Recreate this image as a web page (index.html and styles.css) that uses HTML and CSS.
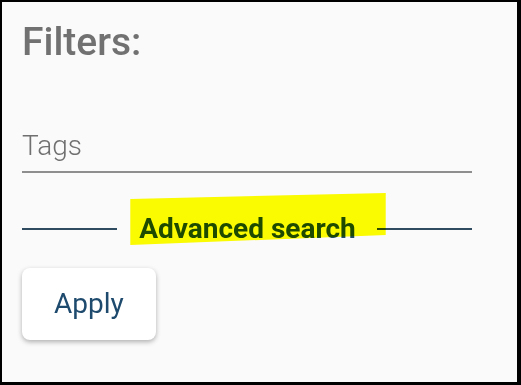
FILE: index.html
```html
<!DOCTYPE html>
<html lang="en">
<head>
    <meta charset="UTF-8">
    <meta name="viewport" content="width=device-width, initial-scale=1.0">
    <title>Filters</title>
    <link rel="stylesheet" href="styles.css">
</head>
<body>
    <div class="frame">
        <h1 class="title">Filters:</h1>

        <div class="field">
            <span class="placeholder">Tags</span>
        </div>

        <div class="advanced">
            <span class="line"></span>
            <span class="advanced-label">Advanced search</span>
            <span class="line"></span>
        </div>

        <button class="apply-button">Apply</button>
    </div>
</body>
</html>
```

FILE: styles.css
```css
html, body {
    margin: 0;
    padding: 0;
}

body {
    font-family: Roboto, 'Noto Sans', sans-serif;
}

.frame {
    box-sizing: border-box;
    width: 521px;
    height: 385px;
    background-color: #fafafa;
    border-style: solid;
    border-color: #000;
    border-width: 2px 4px 3px 2px;
    padding: 17px 0 0 20px;
}

.title {
    margin: 0;
    font-size: 39px;
    font-weight: 500;
    line-height: normal;
    color: #717171;
}

.field {
    width: 450px;
    margin-top: 64px;
    padding-bottom: 9px;
    border-bottom: 2px solid #8e8e8e;
}

.placeholder {
    display: block;
    font-size: 28px;
    font-weight: 300;
    line-height: normal;
    color: #707070;
}

.advanced {
    display: flex;
    align-items: center;
    width: 450px;
    margin-top: 39px;
}

.line {
    flex: 1;
    height: 2px;
    background-color: #2e4b5f;
}

.advanced-label {
    position: relative;
    margin: 0 21px 0 22px;
    font-size: 28px;
    font-weight: 700;
    line-height: normal;
    color: #1e4a6e;
}

/* highlighter mark drawn over the label */
.advanced-label::after {
    content: "";
    position: absolute;
    left: -9px;
    right: -30px;
    top: -19px;
    bottom: 0;
    background-color: #ffff00;
    mix-blend-mode: multiply;
    clip-path: polygon(0 6px, 100% 0, 100% 42px, 0 100%);
}

.apply-button {
    display: block;
    margin-top: 23px;
    padding: 19px 32px 20px;
    font-family: Roboto, 'Noto Sans', sans-serif;
    font-size: 28px;
    font-weight: 400;
    line-height: normal;
    color: #1e4a6e;
    background-color: #fff;
    border: none;
    border-radius: 8px;
    box-shadow: 0 2px 5px rgba(0, 0, 0, 0.3);
    cursor: pointer;
}
```
